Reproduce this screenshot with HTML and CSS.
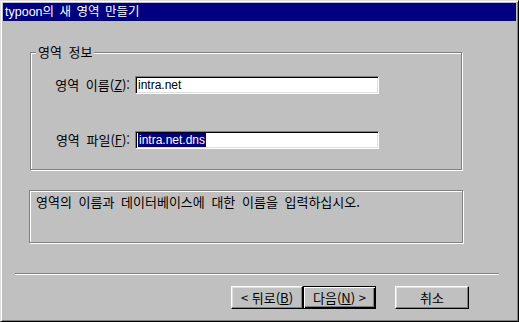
FILE: index.html
```html
<!DOCTYPE html>
<html lang="ko">

<head>
    <meta charset="UTF-8">
    <title>새 영역 만들기</title>
    <link rel="stylesheet" href="styles.css">
</head>

<body>
    <div class="window">
        <div class="title_bar">typoon의 새 영역 만들기</div>
        <div class="content">
            <div class="group">
                <span class="group_label">영역 정보</span>
                <div class="row row_first">
                    <span class="label">영역 이름(<u>Z</u>):</span>
                    <div class="field">intra.net</div>
                </div>
                <div class="row row_second">
                    <span class="label">영역 파일(<u>F</u>):</span>
                    <div class="field"><span class="selected">intra.net.dns</span></div>
                </div>
            </div>
            <div class="info_box">영역의 이름과 데이터베이스에 대한 이름을 입력하십시오.</div>
            <div class="separator"></div>
            <div class="buttons">
                <div class="btn btn_back">&lt; 뒤로(<u>B</u>)</div>
                <div class="btn btn_default">다음(<u>N</u>) &gt;</div>
                <div class="btn btn_cancel">취소</div>
            </div>
        </div>
    </div>
</body>

</html>
```

FILE: styles.css
```css
* {
    margin: 0;
    padding: 0;
    box-sizing: border-box;
}

body {
    background: #c0c0c0;
    font-family: "Noto Sans CJK KR", "DejaVu Sans", sans-serif;
    font-size: 13px;
    word-spacing: 3px;
    color: #000;
}

u {
    text-decoration: underline;
    text-underline-offset: 1px;
}

.window {
    width: 519px;
    height: 322px;
    padding: 1px;
    background: #c0c0c0;
    border-top: 1px solid #dfdfdf;
    border-left: 1px solid #dfdfdf;
    border-right: 1px solid #000;
    border-bottom: 1px solid #000;
    box-shadow: inset 1px 1px #fff, inset -1px -1px #808080;
    display: flex;
    flex-direction: column;
}

.title_bar {
    height: 18px;
    margin: 1px 1px 0 1px;
    background: #000080;
    color: #fff;
    font-family: "Liberation Sans", "Noto Sans CJK KR", sans-serif;
    font-size: 12.5px;
    word-spacing: 2px;
    line-height: 18px;
    padding-left: 2px;
    white-space: nowrap;
}

.content {
    display: flex;
    flex-direction: column;
}

.group {
    position: relative;
    margin: 31px 0 0 28px;
    width: 432px;
    height: 118px;
    border: 1px solid #808080;
    box-shadow: inset 1px 1px #fff, 1px 1px #fff;
}

.group_label {
    position: absolute;
    top: -9px;
    left: 5px;
    padding: 0 2px;
    background: #c0c0c0;
    line-height: 16px;
}

.row {
    display: flex;
    align-items: center;
}

.row_first {
    margin-top: 22px;
}

.row_second {
    margin-top: 36px;
}

.label {
    width: 104px;
    padding-right: 5px;
    text-align: right;
    white-space: nowrap;
}

.field {
    width: 244px;
    height: 18px;
    background: #fff;
    border-top: 1px solid #808080;
    border-left: 1px solid #808080;
    border-right: 1px solid #fff;
    border-bottom: 1px solid #fff;
    box-shadow: inset 1px 1px #000, inset -1px -1px #dfdfdf;
    padding: 1px 0 0 2px;
    font-family: "Liberation Sans", sans-serif;
    font-size: 12px;
    word-spacing: 0;
    line-height: 14px;
    white-space: nowrap;
}

.selected {
    display: inline-block;
    background: #000080;
    color: #fff;
    padding: 0 1px;
}

.info_box {
    margin: 20px 0 0 27px;
    width: 434px;
    height: 53px;
    border: 1px solid #808080;
    box-shadow: inset 1px 1px #fff, 1px 1px #fff;
    padding: 3px 0 0 6px;
    line-height: 16px;
}

.separator {
    margin: 30px 0 0 13px;
    width: 484px;
    height: 2px;
    border-top: 1px solid #808080;
    border-bottom: 1px solid #fff;
}

.buttons {
    display: flex;
    margin: 11px 0 0 229px;
}

.btn {
    height: 23px;
    width: 73px;
    display: flex;
    align-items: center;
    justify-content: center;
    white-space: nowrap;
    word-spacing: 0;
    border-top: 1px solid #fff;
    border-left: 1px solid #fff;
    border-right: 1px solid #000;
    border-bottom: 1px solid #000;
    box-shadow: inset -1px -1px #808080, inset 1px 1px #dfdfdf;
}

.btn_back {
    width: 72px;
}

.btn_default {
    border: 1px solid #000;
    box-shadow: inset 1px 1px #fff, inset -1px -1px #000, inset -2px -2px #808080;
}

.btn_cancel {
    margin-left: 19px;
    width: 74px;
}
```
